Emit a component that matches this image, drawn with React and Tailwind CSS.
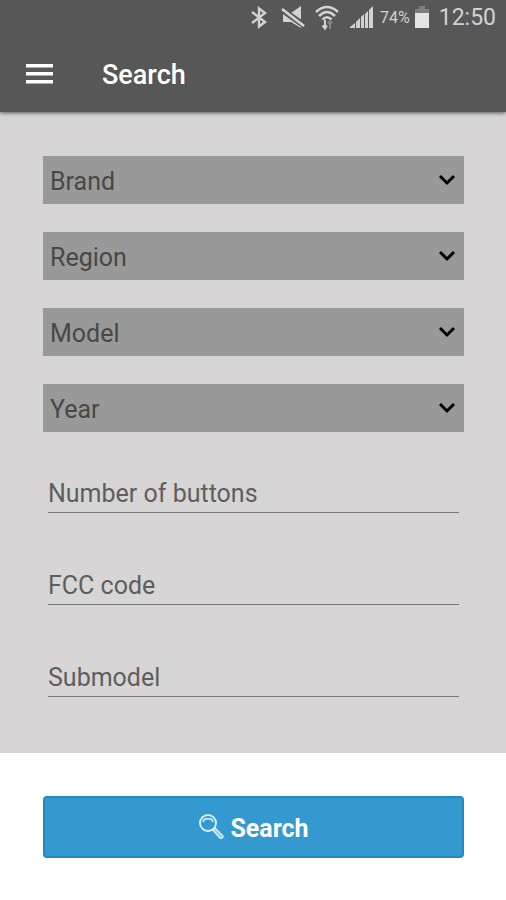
import { useState } from 'react'

const selects = [
  { name: 'brand', label: 'Brand' },
  { name: 'region', label: 'Region' },
  { name: 'model', label: 'Model' },
  { name: 'year', label: 'Year' },
]

const inputs = [
  { name: 'buttons', label: 'Number of buttons' },
  { name: 'fcc', label: 'FCC code' },
  { name: 'submodel', label: 'Submodel' },
]

function StatusBar() {
  return (
    <div className="h-9 flex items-center justify-end pr-[10px] text-[#d2d2d2]">
      <svg className="w-4 h-6 mr-[14px]" viewBox="0 0 16 24" fill="none" stroke="currentColor" strokeWidth="2.4">
        <path d="M1 6 L14 16 L8 20.500 V2.500 L14 7 L1 17" />
      </svg>
      <svg className="w-6 h-6 mr-[10px]" viewBox="0 0 24 24">
        <path d="M2 7 H10 L20 0 V22 L10 16 H2 Z" fill="currentColor" />
        <path d="M0 3 L24 20" stroke="#575757" strokeWidth="6" />
        <path d="M1 3 L23 20" stroke="currentColor" strokeWidth="2.800" />
      </svg>
      <svg className="w-6 h-7 mr-[11px]" viewBox="0 0 24 28" fill="none" stroke="currentColor" strokeWidth="2.500">
        <path d="M1 8 Q12 -2 23 8" />
        <path d="M4 12 Q12 4 20 12" />
        <path d="M7.500 15.500 Q12 11 16.500 15.500" />
        <path d="M10 16 V24 M7.500 21.500 L10 24.500 L12 21.500" strokeWidth="2" />
        <path d="M15 25 V17 M13 19.500 L15 17 L17 19.500" stroke="#858585" strokeWidth="2" />
      </svg>
      <svg className="w-6 h-6 mr-[6px]" viewBox="0 0 24 24" fill="currentColor">
        <path d="M0 21 L5 17 V22 H0 Z" />
        <path d="M6 16 L10 12 V22 H6 Z" />
        <path d="M11 11 L14 8 V22 H11 Z" />
        <path d="M15 8 L18 5 V22 H15 Z" />
        <path d="M19 4 L23 0 V22 H19 Z" />
      </svg>
      <span className="text-base leading-6">74%</span>
      <svg className="w-4 h-6 ml-1 mr-[9px]" viewBox="0 0 16 24">
        <path d="M5 0 H11 V3 H15 V7 H1 V3 H5 Z" fill="#7d7d7d" />
        <path d="M1 7 H15 V22 H1 Z" fill="#e4e4e4" />
      </svg>
      <span className="text-[23px] leading-6">12:50</span>
    </div>
  )
}

function SelectField({ name, label }) {
  return (
    <div className="grid items-center">
      <select
        id={name}
        name={name}
        aria-label={label}
        className="col-start-1 row-start-1 w-full h-12 appearance-none rounded-none bg-[#999999] pt-[3px] pl-[7px] pr-10 text-[25px] text-[#484848] outline-none"
      >
        <option value="">{label}</option>
      </select>
      <svg
        className="col-start-1 row-start-1 justify-self-end mr-2 w-[18px] h-3 pointer-events-none"
        viewBox="0 0 18 12"
        fill="none"
        stroke="#000"
        strokeWidth="3"
      >
        <path d="M2 2 L9 9 L16 2" />
      </svg>
    </div>
  )
}

export default function App() {
  const [form, setForm] = useState({ buttons: '', fcc: '', submodel: '' })

  return (
    <div className="min-h-screen bg-white font-[Roboto,sans-serif]">
      <header className="relative bg-[#575757] shadow-[0_1px_4px_rgba(0,0,0,0.6)]">
        <StatusBar />
        <div className="h-[76px] flex items-center pl-[26px] text-white">
          <button type="button" aria-label="Menu">
            <svg className="w-7 h-5" viewBox="0 0 28 20" fill="currentColor">
              <path d="M0 0 H27 V3.500 H0 Z M0 8 H27 V11.500 H0 Z M0 16 H27 V19.500 H0 Z" />
            </svg>
          </button>
          <h1 className="ml-12 pt-[2px] text-[27px] leading-8 font-medium">Search</h1>
        </div>
      </header>

      <form onSubmit={e => e.preventDefault()}>
        <div className="bg-[#d7d5d6] pl-[43px] pr-[42px] pt-11 pb-14">
          <div className="flex flex-col gap-7">
            {selects.map(s => (
              <SelectField key={s.name} name={s.name} label={s.label} />
            ))}
          </div>

          <div className="mt-[33px] px-[5px] flex flex-col gap-11">
            {inputs.map(i => (
              <input
                key={i.name}
                type="text"
                name={i.name}
                aria-label={i.label}
                placeholder={i.label}
                value={form[i.name]}
                onChange={e => setForm({ ...form, [i.name]: e.target.value })}
                className="w-full h-12 pt-[10px] border-b border-[#777777] bg-transparent text-[25px] text-[#484848] placeholder:text-[#5e5e5e] outline-none"
              />
            ))}
          </div>
        </div>

        <div className="pl-[43px] pr-[42px] py-[43px]">
          <button
            type="submit"
            className="w-full h-[62px] flex items-center justify-center gap-[6px] rounded-sm border-2 border-[#218bc0] bg-[#3399cf] text-white"
          >
            <svg className="w-[26px] h-[26px]" viewBox="0 0 26 26" fill="none" stroke="#d8f0fc">
              <circle cx="10" cy="9" r="8" strokeWidth="2" />
              <path d="M5 8 Q6 4 10 5 Q14 4 15 8" strokeWidth="1.500" />
              <path d="M15 16 L17 14 L25 22 Q25 25 22 24 Z" fill="#8cc8e8" strokeWidth="1.500" />
            </svg>
            <span className="pt-[3px] text-[25px] leading-8 font-bold">Search</span>
          </button>
        </div>
      </form>
    </div>
  )
}
